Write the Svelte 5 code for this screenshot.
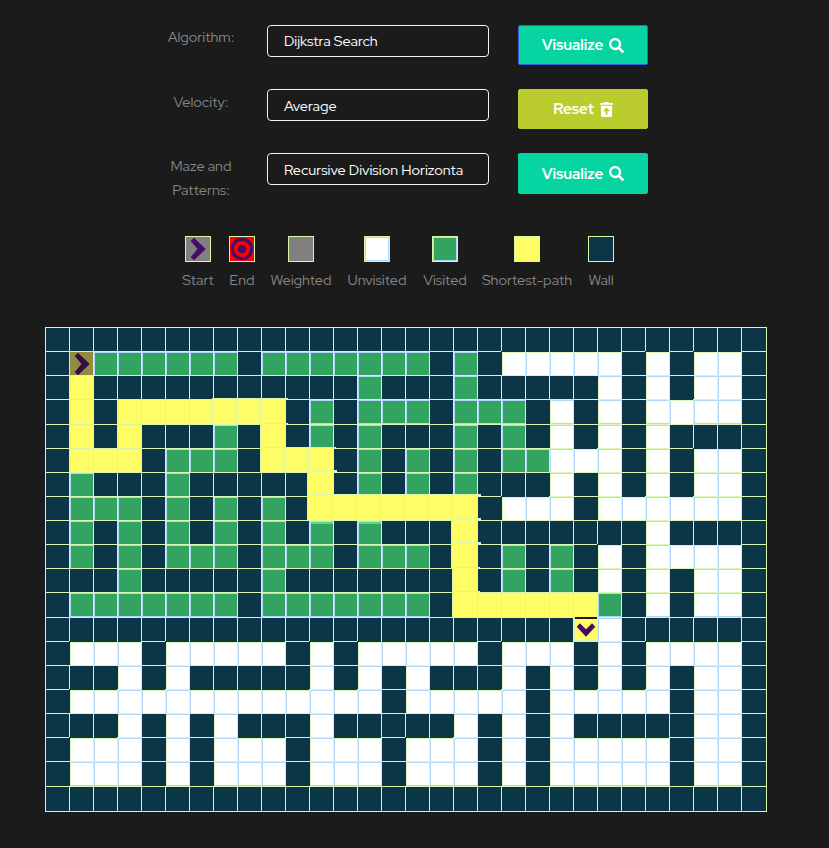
<script>
  const controls = [
    { label: 'Algorithm:', value: 'Dijkstra Search', action: 'Visualize', icon: 'search', kind: 'focused' },
    { label: 'Velocity:', value: 'Average', action: 'Reset', icon: 'trash', kind: 'reset' },
    { label: 'Maze and Patterns:', value: 'Recursive Division Horizonta', action: 'Visualize', icon: 'search', kind: 'tall' }
  ];

  const legend = [
    { name: 'Start', kind: 'start', width: 32 },
    { name: 'End', kind: 'end', width: 26 },
    { name: 'Weighted', kind: 'weighted', width: 62 },
    { name: 'Unvisited', kind: 'unvisited', width: 60 },
    { name: 'Visited', kind: 'visited', width: 46 },
    { name: 'Shortest-path', kind: 'path', width: 88 },
    { name: 'Wall', kind: 'wall', width: 30 }
  ];

  // # wall, v visited, p shortest path, . unvisited, S start, E end
  const maze = [
    '##############################',
    '#Svvvvvv#vvvvvvv#v#.....#.#..#',
    '#p###########v###v#####.#.#..#',
    '#p#ppppppp#v#vvv#vvv#.#.#....#',
    '#p#p###v#p#v#v###v#v#.#.#.####',
    '#ppp#vvv#ppp#v#v#v#vv...#.#..#',
    '#v###v#####p#v#v#v###.#.#.#..#',
    '#vvv#v#v#v#ppppppp#...#......#',
    '#v#v#v#v#v#v#v###p#######.####',
    '#v#v#vvv#vvv#vvv#p#v#v#.#....#',
    '###v#####v#######p#v#v#.#.#..#',
    '#vvvvvvv#vvvvvvv#ppppppv#.#..#',
    '######################E.######',
    '#...#.....#.#.....#...#.#....#',
    '###.#.#####.#.#.###.#.#.#.#..#',
    '#.............#.....#.....#..#',
    '###.#.#.###.#####.#.#.#####..#',
    '#...#.#...#...#...#.#.....#..#',
    '#...#.#...#...#...#.#.....#..#',
    '##############################'
  ];
  const names = { '#': 'wall', v: 'visited', p: 'path', '.': 'unvisited', S: 'start', E: 'end' };

  // cells still caught in their growing animation, with the growth in pixels
  const growth = {
    '3,7': 1, '3,8': 1, '3,9': 1, '4,9': 1, '5,9': 1, '5,10': 1, '5,11': 1,
    '6,11': 2, '7,11': 2, '7,12': 2, '7,13': 2, '7,14': 2, '7,15': 2, '7,16': 2, '7,17': 2,
    '8,17': 2, '9,17': 2, '10,17': 1, '11,17': 1
  };

  const cells = maze.flatMap((row, r) =>
    [...row].map((code, c) => ({
      kind: names[code],
      grow: growth[`${r},${c}`] ?? 0,
      besideWall: code === '.' && row[c - 1] === '#',
      underWall: code === '.' && maze[r - 1]?.[c] === '#',
      deep: (r === 3 || r === 11 || r === 18) && (code === 'v' || code === '.'),
      glow: r === 8 && (c === 11 || c === 13)
    }))
  );
</script>

{#snippet chevron()}
  <svg class="chevron" viewBox="0 0 24 24"><path d="M8 .8 19.700 12 8 23.200 4.700 20 11.500 12 4.700 4Z" fill="currentColor" /></svg>
{/snippet}

<main>
  <section class="controls">
    {#each controls as item}
      <div class="control {item.kind}">
        <div class="label">{item.label}</div>
        <div class="select">{item.value}</div>
        <button class={item.kind}>
          <span>{item.action}</span>
          {#if item.icon === 'search'}
            <svg width="15" height="15" viewBox="0 0 512 512"><path fill="currentColor" d="M505 442.700 405.300 343c-4.500-4.500-10.600-7-17-7H372c27.600-35.300 44-79.700 44-128C416 93.100 322.900 0 208 0S0 93.100 0 208s93.100 208 208 208c48.300 0 92.700-16.400 128-44v16.300c0 6.400 2.500 12.500 7 17l99.700 99.700c9.400 9.400 24.600 9.400 33.900 0l28.300-28.300c9.400-9.400 9.400-24.600.1-34zM208 336c-70.700 0-128-57.200-128-128 0-70.700 57.200-128 128-128 70.700 0 128 57.200 128 128 0 70.700-57.200 128-128 128z" /></svg>
          {:else}
            <svg width="13" height="15" viewBox="0 0 448 512"><path fill="currentColor" fill-rule="evenodd" d="M432 32H312l-9.400-18.700A24 24 0 0 0 281 0H166.800a23.700 23.700 0 0 0-21.400 13.300L136 32H16A16 16 0 0 0 0 48v32a16 16 0 0 0 16 16h416a16 16 0 0 0 16-16V48a16 16 0 0 0-16-16zM32 128v336a48 48 0 0 0 48 48h288a48 48 0 0 0 48-48V128zM224 184l108 112q6 16-10 24h-66v96q0 16-16 16h-32q-16 0-16-16v-96h-66q-16-8-10-24z" /></svg>
          {/if}
        </button>
      </div>
    {/each}
  </section>

  <section class="legend">
    {#each legend as item}
      <div class="entry" style:width="{item.width}px">
        <div class="swatch {item.kind}">
          {#if item.kind === 'start'}
            {@render chevron()}
          {:else if item.kind === 'end'}
            <svg viewBox="0 0 24 24"><circle cx="12" cy="12" r="9.700" fill="none" stroke="currentColor" stroke-width="3.200" /><circle cx="12" cy="12" r="4.300" fill="currentColor" /></svg>
          {/if}
        </div>
        <span>{item.name}</span>
      </div>
    {/each}
  </section>

  <section class="board">
    {#each cells as cell}
      <div
        class="cell {cell.kind}"
        class:beside={cell.besideWall}
        class:under={cell.underWall}
        class:deep={cell.deep}
        class:glow={cell.glow}
      >
        {#if cell.grow}<i class="pulse" style:--g="{cell.grow}px"></i>{/if}
        {#if cell.kind === 'start'}
          {@render chevron()}
        {:else if cell.kind === 'end'}
          <svg viewBox="0 0 24 24"><path d="M3.700 9.800 7 6.300 13 12.300 19 6.300 22.300 9.800 13 19.700Z" fill="currentColor" /></svg>
        {/if}
      </div>
    {/each}
  </section>
</main>

<style>
  :global(body) {
    background: #1b1b1b;
    overflow: hidden;
  }
  main {
    box-sizing: border-box;
    width: 829px;
    height: 848px;
    padding-top: 25px;
    background: #1b1b1b;
    color: #868686;
    font: 400 14.400px/24px 'Red Hat Display', 'Red Hat Text', Inter, 'Open Sans', sans-serif;
  }
  .controls {
    display: flex;
    flex-direction: column;
    height: 211px;
    padding-left: 151px;
  }
  .control {
    display: flex;
    align-items: flex-start;
    height: 64px;
  }
  .label {
    width: 70px;
    padding: 0 15px;
    margin-right: 16px;
    text-align: center;
  }
  .control.reset .label, .control.tall .label { padding-top: 1px; }
  .select {
    box-sizing: border-box;
    width: 222px;
    height: 32px;
    padding-left: 16px;
    margin-right: 29px;
    border: 1px solid #f2f2f2;
    border-radius: 4px;
    color: #fff;
    line-height: 30px;
    white-space: nowrap;
  }
  .control.reset .select, .control.tall .select { line-height: 32px; }
  button {
    display: flex;
    justify-content: center;
    align-items: center;
    gap: 6px;
    box-sizing: border-box;
    width: 130px;
    height: 40px;
    padding: 0;
    border: 1px solid #06d4a1;
    border-radius: 2px;
    background: #06d4a1;
    color: #fff;
    font: 700 15.200px/20px 'Red Hat Display', 'Red Hat Text', Inter, sans-serif;
  }
  button.focused { border-color: #3860e0; }
  button.reset { background: #bbcc2f; border-color: #bbcc2f; }
  button.tall { height: 41px; }

  .legend {
    display: flex;
    gap: 15px;
    height: 91px;
    padding-left: 182px;
  }
  .entry {
    display: flex;
    flex-direction: column;
    align-items: center;
    flex: none;
    white-space: nowrap;
  }
  .swatch {
    box-sizing: border-box;
    width: 26px;
    height: 26px;
    margin-bottom: 6px;
    border: 1px solid #d9f7a6;
    color: #470a68;
  }
  svg { display: block; }
  .start { background: #808080; }
  .end { background: #f00; }
  .weighted { background: #808080; }
  .wall { background: #0c3547; }
  .path { background: #fffd66; }
  .visited { background: #33a460; }
  .unvisited { background: #fff; }
  .swatch.visited, .swatch.unvisited { box-shadow: inset 0 0 0 1px #afd8f8; }

  .board {
    display: grid;
    grid-template-columns: repeat(29, 24px) 25px;
    grid-template-rows: repeat(3, 24px) 25px repeat(7, 24px) 25px repeat(6, 24px) 25px 25px;
    width: 721px;
    margin-left: 45px;
    border-right: 1px solid #d9f7a6;
    border-bottom: 1px solid #d9f7a6;
    --line: #d8f8b4;
    --blue: #afd8f8;
    --dark: #0c3547;
  }
  .cell {
    position: relative;
    color: #470a68;
    box-shadow: inset 0 1px var(--line), inset 1px 0 var(--line);
  }
  .cell.visited, .cell.unvisited {
    box-shadow: inset 0 1px var(--line), inset 1px 0 var(--line), inset 0 2px var(--blue), inset 2px 0 var(--blue);
  }
  .cell.deep {
    box-shadow: inset 0 1px var(--line), inset 1px 0 var(--line), inset 0 -1px var(--blue), inset 0 2px var(--blue), inset 2px 0 var(--blue);
  }
  .cell.beside {
    box-shadow: inset 0 1px var(--line), inset 1px 0 var(--dark), inset 2px 0 var(--line), inset 0 2px var(--blue);
  }
  .cell.under {
    box-shadow: inset 1px 0 var(--line), inset 0 1px var(--dark), inset 0 2px var(--line), inset 2px 0 var(--blue);
  }
  .cell.beside.under {
    box-shadow: inset 0 1px var(--dark), inset 1px 0 var(--dark), inset 2px 0 var(--line), inset 0 2px var(--line);
  }
  .cell.beside.deep {
    box-shadow: inset 0 1px var(--line), inset 1px 0 var(--dark), inset 2px 0 var(--line), inset 0 2px var(--blue), inset 0 -1px var(--blue);
  }
  .cell.glow { background: linear-gradient(#5fd875 4px, #33a460 4px); }
  .cell.path { box-shadow: inset 0 1px #d9f5a6, inset 1px 0 #d9f5a6; }
  .cell.start { background: #918c42; color: #341044; box-shadow: inset 0 1px #f0f080, inset 1px 0 #f0f080; }
  .cell.end {
    background: #fffd66;
    box-shadow: inset 2px 0 #d8f8b4, inset 0 2px #1b1b1b, inset 0 -1px #d8f8b4;
  }
  .pulse {
    position: absolute;
    z-index: 1;
    inset: calc(var(--g) * -1) 0 0 calc(var(--g) * -1);
    background: #fffd66;
    box-shadow: inset 0 1px #daf6a4, inset 1px 0 #daf6a4;
  }
  .pulse::after {
    content: '';
    position: absolute;
    top: 0;
    left: 100%;
    width: calc(var(--g) + 2px);
    height: var(--g);
    background: #d8f8b4;
  }
  .cell.start .chevron { transform: translate(1px, 1px); }
</style>
